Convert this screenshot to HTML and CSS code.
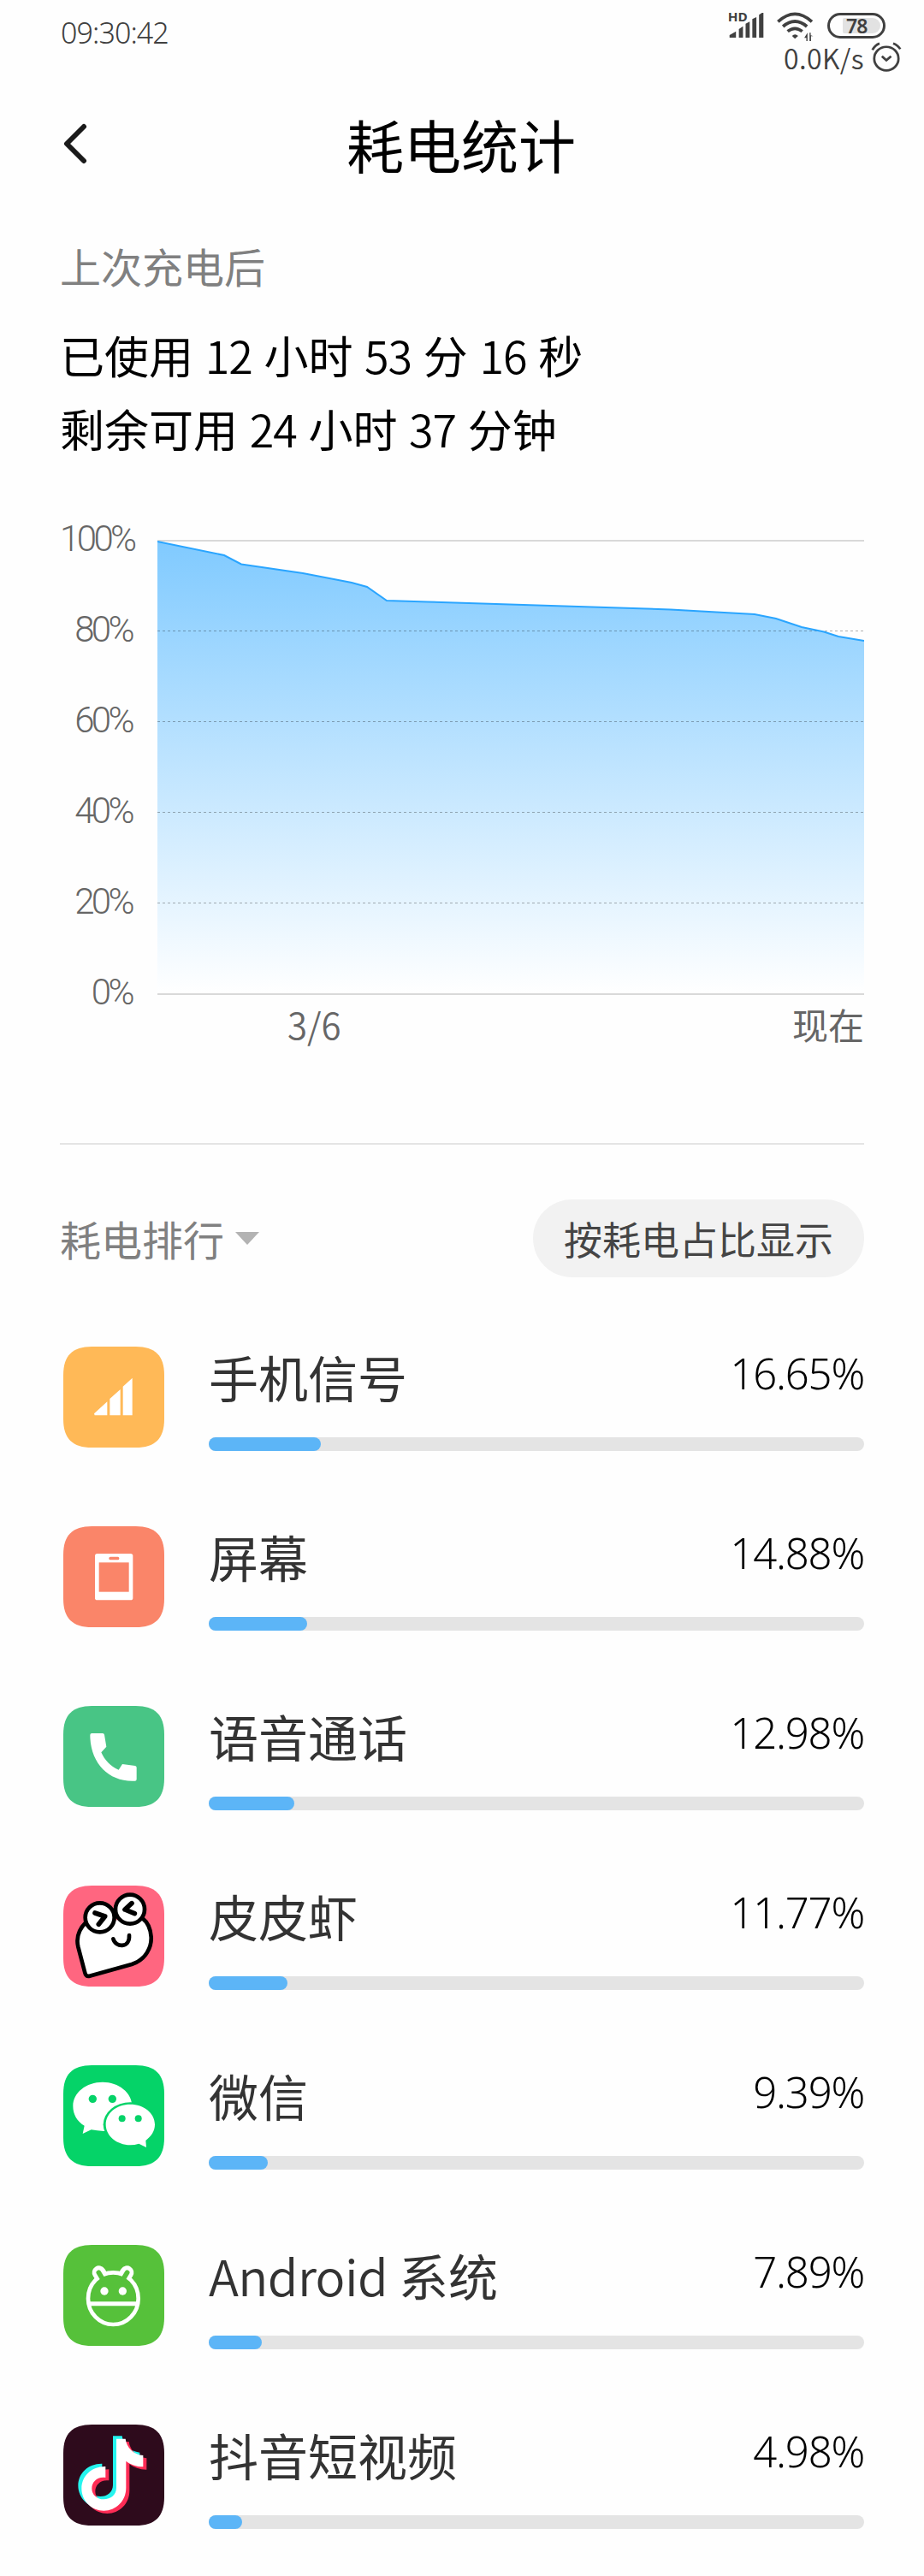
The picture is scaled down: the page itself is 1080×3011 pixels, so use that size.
FILE: index.html
```html
<!DOCTYPE html>
<html lang="zh-CN">
<head>
    <meta charset="UTF-8">
    <meta name="viewport" content="width=device-width, initial-scale=1.0">
    <title>耗电统计</title>
    <link rel="stylesheet" href="styles.css">
</head>
<body>

    <!-- Status bar -->
    <div class="status-bar">
        <div class="clock">09:30:42</div>
        <div class="status-right">
            <div class="status-icons">
                <svg class="signal" viewBox="904 39 123 96" preserveAspectRatio="none">
                    <text x="903" y="75" class="hd">HD</text>
                    <path d="M909 132V123L931 110V132ZM941 132V102L955 92V132ZM964 132V83L978 76V132ZM987 132V67L1001 60V132ZM1010 132V52L1020 45H1025V132Z"/>
                </svg>
                <svg class="wifi" viewBox="1070 39 126 108" preserveAspectRatio="none">
                    <path class="arc" d="M1074 76Q1132 22 1190 76M1091 93Q1132 57 1173 93M1107 110Q1132 90 1157 110"/>
                    <path d="M1122 126Q1132 116 1143 126L1132 136ZM1175 115V144H1171V133H1164ZM1182 115H1186V124L1195 127H1187V144H1182Z"/>
                </svg>
                <div class="battery"><span class="battery-level">78</span></div>
            </div>
            <div class="net-speed">
                <span>0.0K/s</span>
                <svg class="alarm" viewBox="1388 149 104 104" preserveAspectRatio="none">
                    <circle cx="1440" cy="207" r="41"/>
                    <path d="M1425 199L1440 213L1456 199M1393 177Q1401 160 1417 154M1463 154Q1479 160 1487 174"/>
                </svg>
            </div>
        </div>
    </div>

    <!-- Title bar -->
    <header class="header">
        <svg class="back" viewBox="0 0 28 48"><path d="M24 4L4 24L24 44"/></svg>
        <h1>耗电统计</h1>
    </header>

    <main>
        <!-- Usage summary -->
        <p class="since">上次充电后</p>
        <p class="usage">已使用 <span class="num">12</span> 小时 <span class="num">53</span> 分 <span class="num">16</span> 秒</p>
        <p class="usage">剩余可用 <span class="num">24</span> 小时 <span class="num">37</span> 分钟</p>

        <!-- Battery level chart -->
        <section class="chart">
            <div class="y-axis">
                <span>100%</span>
                <span>80%</span>
                <span>60%</span>
                <span>40%</span>
                <span>20%</span>
                <span>0%</span>
            </div>
            <svg class="plot" viewBox="184 631 826 532">
                <defs>
                    <linearGradient id="fade" gradientUnits="userSpaceOnUse" x1="0" y1="632" x2="0" y2="1162">
                        <stop offset="0" stop-color="#80caff"/>
                        <stop offset="1" stop-color="#ffffff"/>
                    </linearGradient>
                </defs>
                <path class="edge" d="M184 632H1010M184 1162H1010"/>
                <path fill="url(#fade)" d="M184 633L262 649L282 659.5L354 670L411 681L429 686L452 702L500 703.5L784 712.5L882 718L907 723L937 733L963 738.5L980 744L1010 749V1161H184Z"/>
                <path class="grid" d="M184 737.5H1010M184 843.5H1010M184 949.5H1010M184 1055.5H1010"/>
                <path class="line" d="M184 633L262 649L282 659.5L354 670L411 681L429 686L452 702L500 703.5L784 712.5L882 718L907 723L937 733L963 738.5L980 744L1010 749"/>
            </svg>
        </section>
        <div class="x-axis">
            <span class="date">3/6</span>
            <span>现在</span>
        </div>

        <!-- Ranking -->
        <div class="rank-head">
            <div class="rank-title">耗电排行<span class="caret"></span></div>
            <div class="pill">按耗电占比显示</div>
        </div>

        <ul class="rank-list">
            <li>
                <svg class="icon" viewBox="0 0 354 354">
                    <path fill="#ffb957" d="M0 100C0 32 32 0 100 0H254C322 0 354 32 354 100V254C354 322 322 354 254 354H100C32 354 0 322 0 254Z"/>
                    <path fill="#fff" d="M108 235L154 193V241H110ZM163 183L200 150V241H163ZM209 140L242 110V241H209Z"/>
                </svg>
                <div class="info">
                    <div class="row"><span class="name">手机信号</span><span class="percent">16.65%</span></div>
                    <div class="bar"><div class="fill" style="width: 131px"></div></div>
                </div>
            </li>
            <li>
                <svg class="icon" viewBox="0 0 354 354">
                    <path fill="#fa8569" d="M0 100C0 32 32 0 100 0H254C322 0 354 32 354 100V254C354 322 322 354 254 354H100C32 354 0 322 0 254Z"/>
                    <rect x="111" y="96" width="133" height="163" rx="8" fill="#fff"/>
                    <rect x="125" y="127" width="105" height="103" fill="#fa8569"/>
                    <rect x="160" y="107" width="36" height="11" rx="5" fill="#fa8569"/>
                </svg>
                <div class="info">
                    <div class="row"><span class="name">屏幕</span><span class="percent">14.88%</span></div>
                    <div class="bar"><div class="fill" style="width: 115px"></div></div>
                </div>
            </li>
            <li>
                <svg class="icon" viewBox="0 0 354 354">
                    <path fill="#48c585" d="M0 100C0 32 32 0 100 0H254C322 0 354 32 354 100V254C354 322 322 354 254 354H100C32 354 0 322 0 254Z"/>
                    <path fill="#fff" d="M100 96H138Q143 96 144 101L151 143L133 163C145 190 165 212 194 224L207 204L252 210Q257 211 257 216V257Q257 263 251 263C160 268 94 200 94 102Q94 96 100 96Z"/>
                </svg>
                <div class="info">
                    <div class="row"><span class="name">语音通话</span><span class="percent">12.98%</span></div>
                    <div class="bar"><div class="fill" style="width: 100px"></div></div>
                </div>
            </li>
            <li>
                <svg class="icon" viewBox="0 0 354 354">
                    <path fill="#ff6680" d="M0 100C0 32 32 0 100 0H254C322 0 354 32 354 100V254C354 322 322 354 254 354H100C32 354 0 322 0 254Z"/>
                    <g class="shrimp">
                        <path d="M80 128C50 158 46 190 52 215L76 306Q79 320 92 317L240 276C290 260 310 215 308 180C306 150 295 128 278 115"/>
                        <circle cx="128" cy="112" r="51"/>
                        <circle cx="234" cy="83" r="51"/>
                        <path d="M111 96L146 108L124 136M240 62L216 84L250 98" stroke-width="17"/>
                        <path d="M175 187C182 217 234 222 231 174"/>
                    </g>
                </svg>
                <div class="info">
                    <div class="row"><span class="name">皮皮虾</span><span class="percent">11.77%</span></div>
                    <div class="bar"><div class="fill" style="width: 92px"></div></div>
                </div>
            </li>
            <li>
                <svg class="icon" viewBox="0 0 354 354">
                    <path fill="#05d368" d="M0 100C0 32 32 0 100 0H254C322 0 354 32 354 100V254C354 322 322 354 254 354H100C32 354 0 322 0 254Z"/>
                    <path fill="#fff" d="M138 59C194 59 241 96 241 143C241 190 200 231 142 231Q118 229 98 226L68 240L74 212C48 196 34 172 34 143C34 96 80 59 138 59Z"/>
                    <ellipse cx="235" cy="208" rx="95" ry="78" fill="#05d368"/>
                    <path fill="#fff" d="M235 137C282 137 321 168 321 208C321 231 308 250 289 264L291 288L265 275Q250 280 235 280C187 280 149 248 149 208C149 168 187 137 235 137Z"/>
                    <g fill="#05d368">
                        <circle cx="103" cy="118" r="14"/>
                        <circle cx="172" cy="118" r="14"/>
                        <circle cx="206" cy="187" r="12"/>
                        <circle cx="263" cy="187" r="12"/>
                    </g>
                </svg>
                <div class="info">
                    <div class="row"><span class="name">微信</span><span class="percent">9.39%</span></div>
                    <div class="bar"><div class="fill" style="width: 69px"></div></div>
                </div>
            </li>
            <li>
                <svg class="icon" viewBox="0 0 354 354">
                    <path fill="#56c13a" d="M0 100C0 32 32 0 100 0H254C322 0 354 32 354 100V254C354 322 322 354 254 354H100C32 354 0 322 0 254Z"/>
                    <path d="M125 97L135 112M223 97L213 112" stroke="#fff" stroke-width="48" stroke-linecap="round"/>
                    <ellipse cx="175" cy="188" rx="88" ry="91" fill="#56c13a" stroke="#fff" stroke-width="14"/>
                    <path d="M124 97L138 120M224 97L210 120" stroke="#56c13a" stroke-width="17" stroke-linecap="round"/>
                    <path d="M90 206H260" stroke="#fff" stroke-width="15"/>
                    <circle cx="144" cy="162" r="14" fill="#fff"/>
                    <circle cx="208" cy="162" r="14" fill="#fff"/>
                </svg>
                <div class="info">
                    <div class="row"><span class="name"><span class="latin">Android</span> 系统</span><span class="percent">7.89%</span></div>
                    <div class="bar"><div class="fill" style="width: 62px"></div></div>
                </div>
            </li>
            <li>
                <svg class="icon" viewBox="0 0 354 354">
                    <defs>
                        <path id="note" d="M186 50H218C222 80 245 105 280 108V148C255 148 235 140 220 128V222C220 268 185 302 142 302C100 302 64 268 64 224C64 180 100 146 148 147V186C118 182 100 202 100 224C100 246 118 262 142 262C166 262 186 246 186 222Z"/>
                    </defs>
                    <path fill="#2e0b1c" d="M0 100C0 32 32 0 100 0H254C322 0 354 32 354 100V254C354 322 322 354 254 354H100C32 354 0 322 0 254Z"/>
                    <use href="#note" x="-12" y="-10" fill="#25f4ee"/>
                    <use href="#note" x="12" y="10" fill="#fe2c55"/>
                    <use href="#note" fill="#fff"/>
                </svg>
                <div class="info">
                    <div class="row"><span class="name">抖音短视频</span><span class="percent">4.98%</span></div>
                    <div class="bar"><div class="fill" style="width: 39px"></div></div>
                </div>
            </li>
        </ul>
    </main>

</body>
</html>
```

FILE: styles.css
```css
* {
    box-sizing: border-box;
}

body {
    margin: 0;
    width: 1080px;
    height: 3011px;
    overflow: hidden;
    background-color: #fefefe;
    color: #000;
    font-family: "Noto Sans CJK SC", sans-serif;
    font-weight: 400;
}

p, h1, ul {
    margin: 0;
    padding: 0;
}

svg {
    display: block;
    flex-shrink: 0;
}

/* Status bar */
.status-bar {
    display: flex;
    justify-content: space-between;
    height: 96px;
    padding: 13px 26px 0 71px;
    color: #404040;
}

.clock {
    font-family: "Noto Sans", sans-serif;
    font-size: 34px;
    font-weight: 350;
    line-height: 50px;
    letter-spacing: -0.9px;
}

.status-right {
    display: flex;
    flex-direction: column;
    align-items: flex-end;
}

.status-icons {
    display: flex;
    height: 36px;
    margin-right: 19px;
}

.signal {
    width: 42px;
    height: 32px;
    margin-right: 15px;
    fill: #404040;
    overflow: visible;
}

.hd {
    font: bold 45px "Noto Sans", sans-serif;
}

.wifi {
    width: 43px;
    height: 36px;
    margin-right: 16px;
    fill: #404040;
}

.arc {
    fill: none;
    stroke: #404040;
    stroke-width: 11;
}

.battery {
    width: 68px;
    height: 30px;
    margin-top: 2px;
    padding: 3px 3px 3px 15px;
    border: 3px solid #404040;
    border-radius: 15px;
}

.battery-level {
    display: block;
    height: 18px;
    padding-left: 4px;
    border-radius: 2px 9px 9px 2px;
    background-color: #e2e2e2;
    font-family: "Noto Sans", sans-serif;
    font-size: 23px;
    font-weight: 600;
    line-height: 18px;
    letter-spacing: -1px;
}

.net-speed {
    display: flex;
    height: 36px;
    gap: 8px;
    font-size: 32px;
    font-weight: 350;
    line-height: 36px;
    letter-spacing: 0.4px;
}

.alarm {
    width: 36px;
    height: 35px;
    fill: none;
    stroke: #404040;
    stroke-width: 8;
}

/* Title bar */
.header {
    display: flex;
    align-items: center;
    height: 144px;
    padding: 0 104px 0 74px;
}

.back {
    width: 28px;
    height: 48px;
    fill: none;
    stroke: #1a1a1a;
    stroke-width: 6;
    stroke-linecap: round;
    stroke-linejoin: round;
}

h1 {
    flex: 1;
    font-size: 67px;
    font-weight: 400;
    line-height: 100px;
    text-align: center;
}

main {
    padding: 39px 70px 0;
}

.since {
    color: #808080;
    font-size: 48px;
    line-height: 62px;
    margin-bottom: 31px;
}

.usage {
    font-size: 52px;
    line-height: 86px;
    white-space: nowrap;
    word-spacing: 2px;
}

.num {
    font-weight: 350;
    letter-spacing: -1px;
}

/* Chart */
.chart {
    display: flex;
    justify-content: space-between;
    margin-top: 60px;
}

.y-axis {
    width: 84px;
    height: 582px;
    display: flex;
    flex-direction: column;
    justify-content: space-between;
    text-align: right;
    color: #666;
    font-family: Roboto, sans-serif;
    font-size: 42px;
    font-weight: 350;
    line-height: 52px;
    letter-spacing: -3.6px;
}

.plot {
    width: 826px;
    height: 532px;
    margin-top: 27px;
}

.edge {
    stroke: #d9d9d9;
    stroke-width: 2;
}

.grid {
    stroke: #000;
    stroke-opacity: 0.3;
    stroke-width: 1;
    stroke-dasharray: 3 3;
}

.line {
    fill: none;
    stroke: #2aa5ff;
    stroke-width: 2;
}

.x-axis {
    display: flex;
    justify-content: space-between;
    height: 170px;
    margin-top: -18px;
    padding-left: 266px;
    border-bottom: 2px solid #e4e4e4;
    color: #666;
    font-size: 42px;
    line-height: 58px;
}

.date {
    font-weight: 350;
}

/* Ranking */
.rank-head {
    display: flex;
    justify-content: space-between;
    align-items: center;
    margin-top: 64px;
    height: 91px;
}

.rank-title {
    display: flex;
    align-items: center;
    padding-bottom: 2px;
    color: #808080;
    font-size: 48px;
}

.caret {
    margin: 2px 0 0 13px;
    border: 14px solid transparent;
    border-top: 15px solid #b3b3b3;
    border-bottom: 0;
}

.pill {
    width: 387px;
    height: 91px;
    border-radius: 46px;
    background-color: #f2f2f2;
    color: #454545;
    font-size: 45px;
    line-height: 91px;
    text-align: center;
}

.rank-list {
    list-style-type: none;
    padding: 81px 0 0 4px;
}

.rank-list li {
    display: flex;
    gap: 52px;
    height: 210px;
}

.icon {
    width: 118px;
    height: 118px;
}

.info {
    flex: 1;
}

.row {
    display: flex;
    justify-content: space-between;
    height: 106px;
}

.name {
    color: #333;
    font-size: 58px;
    line-height: 70px;
}

.latin {
    font-weight: 350;
    letter-spacing: -0.6px;
}

.percent {
    font-family: "Noto Sans", sans-serif;
    font-size: 49px;
    font-weight: 350;
    line-height: 62px;
    letter-spacing: -1.2px;
}

.bar {
    height: 16px;
    border-radius: 8px;
    background-color: #e4e4e4;
}

.fill {
    height: 16px;
    border-radius: 8px;
    background-color: #5cb5f7;
}

.shrimp {
    fill: #fff;
    stroke: #000;
    stroke-width: 14;
    stroke-linecap: round;
    stroke-linejoin: round;
}

.shrimp path:nth-child(n+4) {
    fill: none;
}
```
